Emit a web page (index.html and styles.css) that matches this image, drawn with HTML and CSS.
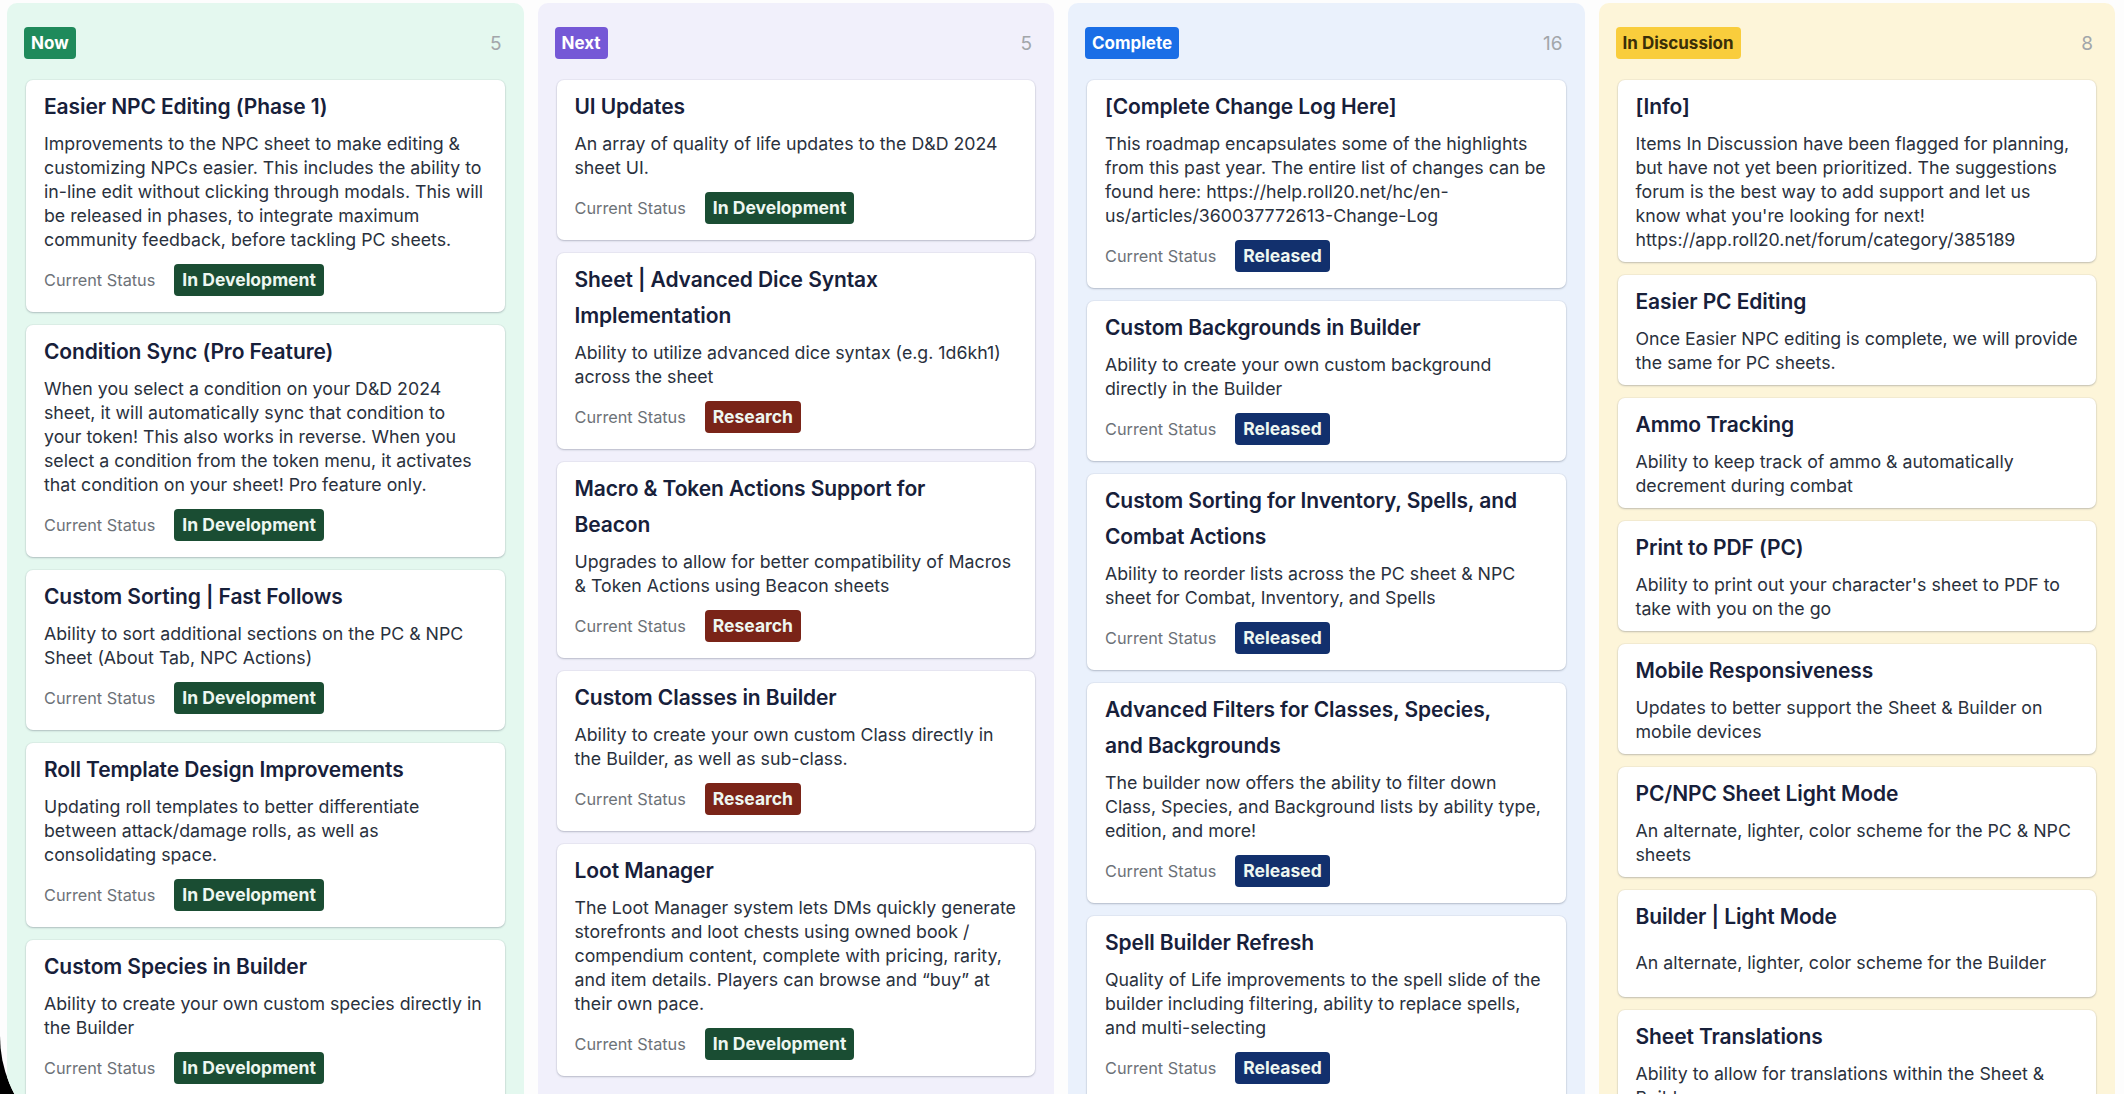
FILE: index.html
```html
<!DOCTYPE html>
<html lang="en">
<head>
<meta charset="utf-8">
<title>Roadmap</title>
<link rel="stylesheet" href="styles.css">
</head>
<body>
<div class="window">
  <div class="board">

    <div class="column col-now">
      <div class="col-head">
        <span class="tag tag-now">Now</span>
        <span class="count">5</span>
      </div>
      <div class="card">
        <h3>Easier NPC Editing (Phase 1)</h3>
        <p>Improvements to the NPC sheet to make editing &amp; customizing NPCs easier. This includes the ability to in-line edit without clicking through modals. This will be released in phases, to integrate maximum community feedback, before tackling PC sheets.</p>
        <div class="status"><span class="label">Current Status</span><span class="pill dev">In Development</span></div>
      </div>
      <div class="card">
        <h3>Condition Sync (Pro Feature)</h3>
        <p>When you select a condition on your D&amp;D 2024 sheet, it will automatically sync that condition to your token! This also works in reverse. When you select a condition from the token menu, it activates that condition on your sheet! Pro feature only.</p>
        <div class="status"><span class="label">Current Status</span><span class="pill dev">In Development</span></div>
      </div>
      <div class="card">
        <h3>Custom Sorting | Fast Follows</h3>
        <p>Ability to sort additional sections on the PC &amp; NPC Sheet (About Tab, NPC Actions)</p>
        <div class="status"><span class="label">Current Status</span><span class="pill dev">In Development</span></div>
      </div>
      <div class="card">
        <h3>Roll Template Design Improvements</h3>
        <p>Updating roll templates to better differentiate between attack/damage rolls, as well as consolidating space.</p>
        <div class="status"><span class="label">Current Status</span><span class="pill dev">In Development</span></div>
      </div>
      <div class="card">
        <h3>Custom Species in Builder</h3>
        <p>Ability to create your own custom species directly in the Builder</p>
        <div class="status"><span class="label">Current Status</span><span class="pill dev">In Development</span></div>
      </div>
    </div>

    <div class="column col-next">
      <div class="col-head">
        <span class="tag tag-next">Next</span>
        <span class="count">5</span>
      </div>
      <div class="card">
        <h3>UI Updates</h3>
        <p>An array of quality of life updates to the D&amp;D 2024 sheet UI.</p>
        <div class="status"><span class="label">Current Status</span><span class="pill dev">In Development</span></div>
      </div>
      <div class="card">
        <h3>Sheet | Advanced Dice Syntax Implementation</h3>
        <p>Ability to utilize advanced dice syntax (e.g. 1d6kh1) across the sheet</p>
        <div class="status"><span class="label">Current Status</span><span class="pill research">Research</span></div>
      </div>
      <div class="card">
        <h3>Macro &amp; Token Actions Support for Beacon</h3>
        <p>Upgrades to allow for better compatibility of Macros &amp; Token Actions using Beacon sheets</p>
        <div class="status"><span class="label">Current Status</span><span class="pill research">Research</span></div>
      </div>
      <div class="card">
        <h3>Custom Classes in Builder</h3>
        <p>Ability to create your own custom Class directly in the Builder, as well as sub-class.</p>
        <div class="status"><span class="label">Current Status</span><span class="pill research">Research</span></div>
      </div>
      <div class="card">
        <h3>Loot Manager</h3>
        <p>The Loot Manager system lets DMs quickly generate storefronts and loot chests using owned book / compendium content, complete with pricing, rarity, and item details. Players can browse and “buy” at their own pace.</p>
        <div class="status"><span class="label">Current Status</span><span class="pill dev">In Development</span></div>
      </div>
    </div>

    <div class="column col-done">
      <div class="col-head">
        <span class="tag tag-done">Complete</span>
        <span class="count">16</span>
      </div>
      <div class="card">
        <h3>[Complete Change Log Here]</h3>
        <p>This roadmap encapsulates some of the highlights from this past year. The entire list of changes can be found here: https://help.roll20.net/hc/en-us/articles/360037772613-Change-Log</p>
        <div class="status"><span class="label">Current Status</span><span class="pill released">Released</span></div>
      </div>
      <div class="card">
        <h3>Custom Backgrounds in Builder</h3>
        <p>Ability to create your own custom background directly in the Builder</p>
        <div class="status"><span class="label">Current Status</span><span class="pill released">Released</span></div>
      </div>
      <div class="card">
        <h3>Custom Sorting for Inventory, Spells, and Combat Actions</h3>
        <p>Ability to reorder lists across the PC sheet &amp; NPC sheet for Combat, Inventory, and Spells</p>
        <div class="status"><span class="label">Current Status</span><span class="pill released">Released</span></div>
      </div>
      <div class="card">
        <h3>Advanced Filters for Classes, Species, and Backgrounds</h3>
        <p>The builder now offers the ability to filter down Class, Species, and Background lists by ability type, edition, and more!</p>
        <div class="status"><span class="label">Current Status</span><span class="pill released">Released</span></div>
      </div>
      <div class="card">
        <h3>Spell Builder Refresh</h3>
        <p>Quality of Life improvements to the spell slide of the builder including filtering, ability to replace spells, and multi-selecting</p>
        <div class="status"><span class="label">Current Status</span><span class="pill released">Released</span></div>
      </div>
    </div>

    <div class="column col-talk">
      <div class="col-head">
        <span class="tag tag-talk">In Discussion</span>
        <span class="count">8</span>
      </div>
      <div class="card">
        <h3>[Info]</h3>
        <p>Items In Discussion have been flagged for planning, but have not yet been prioritized. The suggestions forum is the best way to add support and let us<br>know what you're looking for next!<br>https://app.roll20.net/forum/category/385189</p>
      </div>
      <div class="card">
        <h3>Easier PC Editing</h3>
        <p>Once Easier NPC editing is complete, we will provide the same for PC sheets.</p>
      </div>
      <div class="card">
        <h3>Ammo Tracking</h3>
        <p>Ability to keep track of ammo &amp; automatically decrement during combat</p>
      </div>
      <div class="card">
        <h3>Print to PDF (PC)</h3>
        <p>Ability to print out your character's sheet to PDF to take with you on the go</p>
      </div>
      <div class="card">
        <h3>Mobile Responsiveness</h3>
        <p>Updates to better support the Sheet &amp; Builder on mobile devices</p>
      </div>
      <div class="card">
        <h3>PC/NPC Sheet Light Mode</h3>
        <p>An alternate, lighter, color scheme for the PC &amp; NPC sheets</p>
      </div>
      <div class="card">
        <h3>Builder | Light Mode</h3>
        <p class="spaced">An alternate, lighter, color scheme for the Builder</p>
      </div>
      <div class="card">
        <h3>Sheet Translations</h3>
        <p>Ability to allow for translations within the Sheet &amp; Builder</p>
      </div>
    </div>

  </div>
</div>
</body>
</html>
```

FILE: styles.css
```css
* { margin: 0; padding: 0; box-sizing: border-box; }

html, body {
  height: 100%;
  overflow: hidden;
  background: #000;
}

body {
  font-family: Inter, "Liberation Sans", sans-serif;
  color: #2c3340;
}

/* the window, its lower left corner shows the black behind it */
.window {
  height: 1160px;
  background: #fdfdfd;
  border-bottom-left-radius: 124px;
  overflow: hidden;
}

.board {
  display: grid;
  grid-template-columns: repeat(4, 1fr);
  gap: 14px;
  padding: 3px 9px 0 7px;
  align-items: stretch;
}

.column {
  border-radius: 10px;
  padding: 24px 19px 22px;
  min-height: 1150px;
}
.col-now  { background: #e4f8ef; }
.col-next { background: #f1f0fb; }
.col-done { background: #eaf1fc; }
.col-talk { background: #fdf5d9; }

.col-head {
  display: flex;
  align-items: center;
  justify-content: space-between;
  margin: 0 0 21px -2px;
}

.tag {
  display: inline-block;
  height: 32px;
  line-height: 32px;
  padding: 0 7px;
  border-radius: 4px;
  font-size: 17px;
  font-weight: 700;
  color: #fff;
}
.tag-now  { background: #1f8a5b; }
.tag-next { background: #7558d6; }
.tag-done { background: #1a6ee6; }
.tag-talk { background: #f9cd3c; color: #3a2f08; }

.count {
  font-size: 19px;
  color: #a2a6aa;
  padding-right: 3px;
}

.card {
  background: #fff;
  border-radius: 7px;
  padding: 9px 18px 10px;
  margin-bottom: 13px;
  box-shadow: 0 1px 2px rgba(40, 50, 70, 0.25), 0 0 0 1px rgba(40, 50, 70, 0.04);
}

.card h3 {
  font-size: 21px;
  line-height: 36px;
  font-weight: 600;
  color: #17203a;
  letter-spacing: -0.1px;
  padding-right: 23px;
}

.card p {
  margin-top: 7px;
  font-size: 17.75px;
  line-height: 24px;
  color: #2a313d;
}
.card p.spaced { padding: 9px 0 12px; }

.status {
  display: flex;
  align-items: center;
  gap: 19px;
  margin: 12px 0 6px;
}

.label {
  font-size: 16.3px;
  color: #6d7278;
}

.pill {
  display: inline-block;
  height: 32px;
  line-height: 32px;
  padding: 0 8px;
  border-radius: 4px;
  font-size: 17.5px;
  font-weight: 700;
  color: #eef7f1;
}
.pill.dev      { background: #1a4d33; }
.pill.research { background: #7a2418; }
.pill.released { background: #12306d; }
```
